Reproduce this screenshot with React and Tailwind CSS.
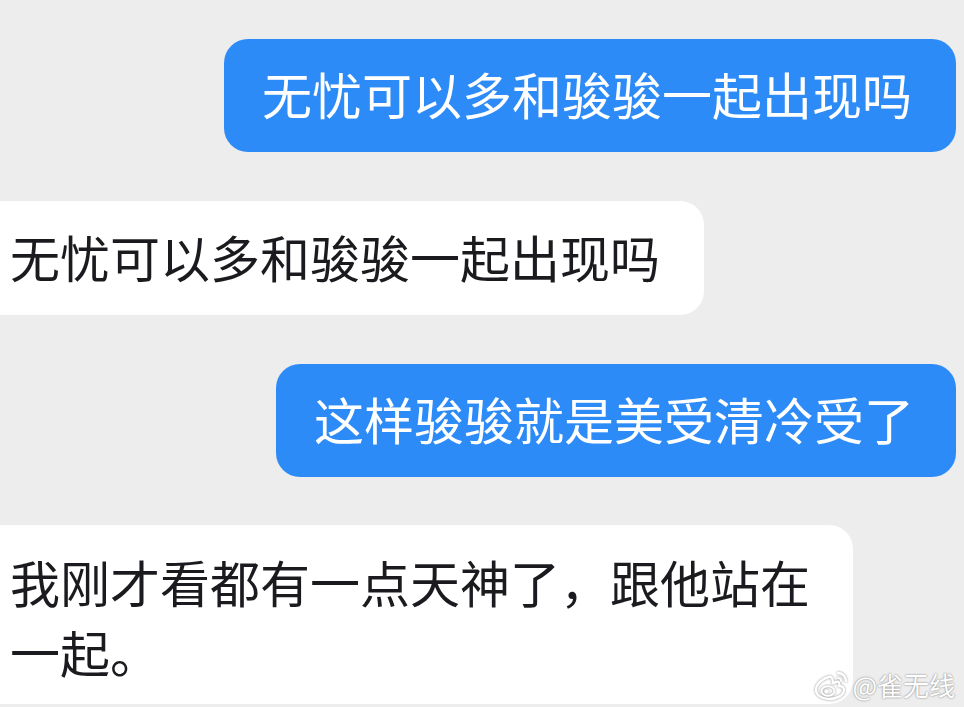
import React from "react";

const font = { fontFamily: '"Noto Sans CJK SC", "Noto Sans", sans-serif' };

function WeiboMark() {
  return (
    <svg width="36" height="32" viewBox="0 0 36 32" className="drop-shadow-[0_0_1px_rgba(0,0,0,0.45)]">
      {/* body */}
      <path
        d="M15 8c-6 1-13 7-13 13 0 5 6 9 13 9 8 0 15-4 15-9 0-3-3-4-5-4 1-3 0-5-3-4l-3 1c0-3-1-7-4-6z"
        fill="none"
        stroke="#ffffff"
        strokeWidth="2.4"
        strokeLinejoin="round"
      />
      {/* face */}
      <ellipse cx="14" cy="22" rx="6.5" ry="4.8" fill="none" stroke="#ffffff" strokeWidth="2" />
      <circle cx="12.5" cy="22.5" r="2.2" fill="#ffffff" />
      {/* signal arcs */}
      <path d="M24 4c4 0 8 3 8 8" fill="none" stroke="#ffffff" strokeWidth="2.4" strokeLinecap="round" />
      <path d="M24 9c1.8 0 3 1.2 3 3" fill="none" stroke="#ffffff" strokeWidth="2.2" strokeLinecap="round" />
    </svg>
  );
}

function Outgoing({ children, width }) {
  return (
    <div className="flex justify-end pr-[8px]">
      <div
        className={`rounded-[24px] bg-[#2d8bf8] pl-[38px] pr-[40px] pt-[20px] pb-[25px] text-[50px] leading-[68px] text-white whitespace-nowrap ${width}`}
      >
        {children}
      </div>
    </div>
  );
}

function Incoming({ children, width, py, leading }) {
  return (
    <div className="flex justify-start">
      <div
        className={`rounded-r-[24px] bg-white pl-[10px] pr-[40px] text-[50px] text-[#1b1b1f] ${leading} ${py} ${width}`}
      >
        {children}
      </div>
    </div>
  );
}

export default function App() {
  return (
    <div className="relative h-[707px] w-[964px] overflow-hidden bg-[#ededed]" style={font}>
      <div className="flex flex-col pt-[39px]">
        <Outgoing width="w-[732px]">无忧可以多和骏骏一起出现吗</Outgoing>
        <div className="h-[49px]" />
        <Incoming width="w-[704px]" leading="leading-[68px]" py="pt-[21px] pb-[25px]">
          无忧可以多和骏骏一起出现吗
        </Incoming>
        <div className="h-[49px]" />
        <Outgoing width="w-[680px]">这样骏骏就是美受清冷受了</Outgoing>
        <div className="h-[48px]" />
        <Incoming width="w-[853px]" leading="leading-[70px]" py="pt-[21px] pb-[18px]">
          我刚才看都有一点天神了，跟他站在一起。
        </Incoming>
      </div>

      <div className="absolute bottom-[6px] right-[9px] flex items-center gap-[2px] text-[26px] leading-none text-white [text-shadow:0_0_2px_rgba(0,0,0,0.55)]">
        <WeiboMark />
        <span>@雀无线</span>
      </div>
    </div>
  );
}
